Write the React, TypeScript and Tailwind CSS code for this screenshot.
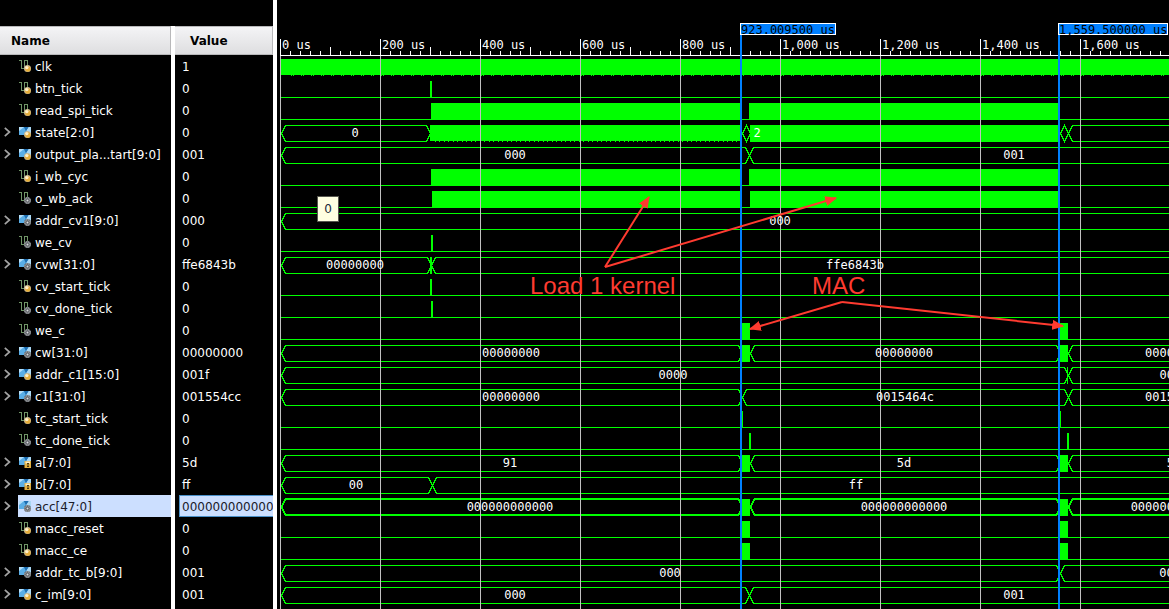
import React from "react";

type Kind = "in" | "out" | "lock";
type Label = [number, string];

interface Signal {
  name: string;
  value: string;
  kind: Kind;
  bus?: boolean;
  selected?: boolean;
  /** bus segments: [start, end] */
  cells?: [number, number][];
  /** solid activity: [start, width] */
  fills?: [number, number][];
  labels?: Label[];
}

const END = 4000;
const HALVES: [number, number][] = [[151, 309], [469, 309]];
const BURSTS: [number, number][] = [[462, 8], [780, 8]];
const BURST_CELLS: [number, number][] = [[1, 462], [470, 780], [788, END]];

/* Horizontal positions are pixels from t = 0, at 2 us per pixel. */
const signals: Signal[] = [
  { name: "clk", value: "1", kind: "in" },
  { name: "btn_tick", value: "0", kind: "in", fills: [[150, 2]] },
  { name: "read_spi_tick", value: "0", kind: "in", fills: HALVES },
  { name: "state[2:0]", value: "0", kind: "in", bus: true, cells: [[1, 150], [462, 470], [780, 788], [788, END]], fills: [[150, 310], [470, 308]], labels: [[75, "0"], [477, "2"]] },
  { name: "output_pla...tart[9:0]", value: "001", kind: "in", bus: true, cells: [[1, 469], [469, END]], labels: [[235, "000"], [734, "001"]] },
  { name: "i_wb_cyc", value: "0", kind: "in", fills: HALVES },
  { name: "o_wb_ack", value: "0", kind: "out", fills: [[152, 308], [470, 308]] },
  { name: "addr_cv1[9:0]", value: "000", kind: "out", bus: true, cells: [[1, END]], labels: [[500, "000"]] },
  { name: "we_cv", value: "0", kind: "out", fills: [[151, 2]] },
  { name: "cvw[31:0]", value: "ffe6843b", kind: "out", bus: true, cells: [[1, 151], [151, END]], fills: [[150, 2]], labels: [[75, "00000000"], [575, "ffe6843b"]] },
  { name: "cv_start_tick", value: "0", kind: "in", fills: [[150, 2]] },
  { name: "cv_done_tick", value: "0", kind: "out", fills: [[151, 2]] },
  { name: "we_c", value: "0", kind: "out", fills: BURSTS },
  { name: "cw[31:0]", value: "00000000", kind: "out", bus: true, cells: BURST_CELLS, fills: BURSTS, labels: [[231, "00000000"], [624, "00000000"], [894, "00000000"]] },
  { name: "addr_c1[15:0]", value: "001f", kind: "in", bus: true, cells: [[1, 788], [788, END]], fills: [[787, 1]], labels: [[393, "0000"], [894, "001f"]] },
  { name: "c1[31:0]", value: "001554cc", kind: "out", bus: true, cells: [[1, 462], [462, 788], [788, END]], labels: [[231, "00000000"], [625, "0015464c"], [894, "001554cc"]] },
  { name: "tc_start_tick", value: "0", kind: "in", fills: [[462, 1], [780, 1]] },
  { name: "tc_done_tick", value: "0", kind: "out", fills: [[469, 2], [787, 2]] },
  { name: "a[7:0]", value: "5d", kind: "lock", bus: true, cells: BURST_CELLS, fills: BURSTS, labels: [[230, "91"], [624, "5d"], [894, "5d"]] },
  { name: "b[7:0]", value: "ff", kind: "lock", bus: true, cells: [[1, 152], [152, END]], labels: [[76, "00"], [576, "ff"]] },
  { name: "acc[47:0]", value: "000000000000", kind: "out", bus: true, selected: true, cells: BURST_CELLS, fills: BURSTS, labels: [[230, "000000000000"], [624, "000000000000"], [894, "000000000000"]] },
  { name: "macc_reset", value: "0", kind: "in", fills: BURSTS },
  { name: "macc_ce", value: "0", kind: "in", fills: BURSTS },
  { name: "addr_tc_b[9:0]", value: "001", kind: "out", bus: true, cells: [[1, 780], [780, END]], labels: [[390, "000"], [890, "001"]] },
  { name: "c_im[9:0]", value: "001", kind: "in", bus: true, cells: [[1, 469], [469, END]], labels: [[235, "000"], [734, "001"]] },
];

const MONO = "font-['DejaVu_Sans_Mono',monospace] text-[12px]";

function Badge({ kind }: { kind: Kind }) {
  if (kind === "lock") {
    return (
      <g>
        <rect x="5.5" y="5" width="6.5" height="7" fill="#e3b040" />
        <rect x="6.5" y="5.5" width="4.5" height="2" fill="#fbeec4" />
        <path d="M8 7.5h2M9 7.5v3M8 10.5h2" stroke="#4b3a12" strokeWidth="1" />
      </g>
    );
  }
  if (kind === "out") {
    return (
      <g>
        <circle cx="8.5" cy="8.500" r="3.500" fill="#5f6266" />
        <circle cx="8.500" cy="8.500" r="2.700" fill="none" stroke="#c4c8cc" strokeWidth="1" strokeDasharray="1.3 0.8" />
        <circle cx="8.500" cy="8.500" r="1" fill="#d8dade" />
      </g>
    );
  }
  return (
    <g>
      <circle cx="8.5" cy="8.5" r="3.5" fill="#c9b993" />
      <circle cx="8.9" cy="9" r="2.700" fill="#e6ae3a" />
      <circle cx="7.8" cy="7.600" r="1.700" fill="#fff0c8" />
    </g>
  );
}

function SignalIcon({ bus, kind }: { bus?: boolean; kind: Kind }) {
  return (
    <svg width="12" height="12" viewBox="0 0 12 12" className="shrink-0" aria-hidden="true">
      {bus ? (
        <g>
          <rect x="0" y="1" width="12" height="8" fill="#2f83c4" />
          <path d="M0 1h5L7 5 5 9H0z" fill="#5aaee6" />
          <path d="M0 1h5L0 5z" fill="#b4def8" />
          <path d="M12 1H9.500L7 5l2 4h3z" fill="#a9d8f5" />
          <path d="M5 1h4.500L7 5z" fill="#1e6fb2" />
        </g>
      ) : (
        <path d="M0 0.500h2.500v8H5.500v-8h3v5" fill="none" stroke="#6f9466" strokeWidth="1" shapeRendering="crispEdges" />
      )}
      <Badge kind={kind} />
    </svg>
  );
}

function SignalRow({ s }: { s: Signal }) {
  return (
    <tr className="h-[22px]">
      <td className="border-r-4 border-white p-0">
        <div className="flex h-[22px] items-center">
          <span className="flex w-[18px] shrink-0 items-center pl-1">
            {s.bus && (
              <button type="button" aria-label={"Expand " + s.name} className="block">
                <svg width="7" height="10" viewBox="0 0 7 10" aria-hidden="true">
                  <path d="M0.800 0.800l4.700 4.200-4.700 4.200" fill="none" stroke="#a3a3a3" strokeWidth="1.700" />
                </svg>
              </button>
            )}
          </span>
          <span className={s.selected ? "flex h-[22px] min-w-0 flex-1 items-center gap-1 bg-[#ccdfff] pl-px text-[#1b1b2b]" : "flex h-[22px] min-w-0 flex-1 items-center gap-1 pl-px"}>
            <SignalIcon bus={s.bus} kind={s.kind} />
            <span className="pt-[2px] whitespace-nowrap">{s.name}</span>
          </span>
        </div>
      </td>
      <td className="overflow-hidden p-0 pl-1">
        <div className={s.selected ? "flex h-[22px] items-center border border-r-0 border-[#4a90c8] bg-[#ccdfff] pt-[2px] pl-[2px] text-[#1b1b2b]" : "flex h-[22px] items-center pt-[2px] pl-[3px]"}>
          {s.value}
        </div>
      </td>
    </tr>
  );
}

function Wave({ s, row }: { s: Signal; row: number }) {
  const top = 59 + 22 * row;
  const low = top + 16;
  const thick = s.selected;
  const o = thick ? 0 : 0.5;
  const mid = top + 8 + o;
  if (s.name === "clk") {
    return (
      <g>
        <rect x="1" y={top} width={END} height="16" fill="#00ff00" />
        <line x1="11" x2={END} y1={low + 0.5} y2={low + 0.5} stroke="#00ff00" strokeDasharray="1 1 1 7" />
      </g>
    );
  }
  const isState = s.name === "state[2:0]";
  return (
    <g>
      {!s.bus && <rect x="1" y={low} width={END} height="1" fill="#00ff00" />}
      {s.fills?.map(([x, w]) => (
        <rect key={x} x={x} y={top} width={w} height={isState && x === 150 ? 16 : 17} fill="#00ff00" />
      ))}
      {isState && <line x1="155" x2="460" y1={low + 0.5} y2={low + 0.5} stroke="#00ff00" strokeDasharray="1 3 1 4" />}
      {s.cells?.map(([a, b]) => (
        <path
          key={a}
          d={`M${a + 0.5} ${mid}L${a + 4.5} ${top + o}H${b - 3.5}L${b + 0.5} ${mid}L${b - 3.5} ${low + o}H${a + 4.5}Z`}
          fill="none"
          stroke="#00ff00"
          strokeWidth={thick ? 2 : 1}
        />
      ))}
    </g>
  );
}

const minor = Array.from({ length: 240 }, (_, i) => i * 10);
const major = Array.from({ length: 24 }, (_, i) => i * 100);
const LAST_LABEL = 800;

function Waveforms() {
  return (
    <svg className={"absolute inset-0 h-full w-full " + MONO} role="img" aria-label="Waveforms">
      <defs>
        <marker id="head" viewBox="0 0 10 10" refX="9" refY="5" markerWidth="12" markerHeight="12" markerUnits="userSpaceOnUse" orient="auto">
          <path d="M0 0.800L10 5L0 9.200z" fill="#ff3b30" />
        </marker>
      </defs>
      <g transform="translate(3 0)">
        <g shapeRendering="crispEdges">
          <rect x="0" y="55" width={END} height="1" fill="#fff" />
          {minor.map((x) => {
            const h = x % 100 === 0 ? 16 : x % 50 === 0 && x < 500 ? 8 : 4;
            return <rect key={x} x={x} y={55 - h} width="1" height={h} fill="#fff" />;
          })}
          {signals.map((s, i) => (
            <Wave key={s.name} s={s} row={i} />
          ))}
          {major.map((x) => (
            <rect key={x} x={x} y="56" width="1" height="100%" fill="#c0c0c0" />
          ))}
        </g>
        <g fill="#fff">
          {major.filter((x) => x <= LAST_LABEL).map((x) => (
            <text key={x} x={x + 2} y="49">{(x * 2).toLocaleString("en-US") + " us"}</text>
          ))}
        </g>
        <g fill="#fff" textAnchor="middle">
          {signals.map((s, i) =>
            s.labels?.map(([x, t]) => (
              <text key={s.name + x} x={x} y={71 + 22 * i}>{t}</text>
            ))
          )}
        </g>
        <g shapeRendering="crispEdges" fill="#0080ff">
          <rect x="460" y="35" width="2" height="100%" />
          <rect x="778" y="35" width="2" height="100%" />
          <rect x="460.500" y="23.500" width="95" height="11" stroke="#fff" />
          <rect x="778.500" y="23.500" width="109" height="11" stroke="#fff" />
        </g>
        <text x="461" y="34" fill="#000">923.009500 us</text>
        <text x="779" y="34" fill="#000">1,559.500000 us</text>
        <g stroke="#ff3b30" strokeWidth="2">
          <line x1="325" y1="267" x2="369" y2="197" markerEnd="url(#head)" />
          <line x1="325" y1="267" x2="556" y2="198" markerEnd="url(#head)" />
          <line x1="562" y1="302" x2="470" y2="329" markerEnd="url(#head)" />
          <line x1="562" y1="302" x2="783" y2="326" markerEnd="url(#head)" />
        </g>
        <g fill="#ff3b30" className="font-['Liberation_Sans',sans-serif] text-[24px]">
          <text x="250" y="294">Load 1 kernel</text>
          <text x="532" y="294">MAC</text>
        </g>
      </g>
    </svg>
  );
}

const HEAD = "flex h-[29px] items-center border-t border-r border-b border-[#b8b8ba] bg-linear-to-b from-[#f4f4f6] to-[#dedee0] text-left font-bold text-black";

export default function App() {
  return (
    <main className="flex min-h-screen overflow-hidden bg-black font-['DejaVu_Sans',sans-serif] text-[12px] leading-[16px] text-white">
      <section className="flex w-[277px] shrink-0 flex-col border-r-4 border-white pt-[26px]">
        <table className="w-full table-fixed border-separate border-spacing-0">
          <colgroup>
            <col className="w-[175px]" />
            <col />
          </colgroup>
          <thead>
            <tr>
              <th scope="col" className="border-r-4 border-white p-0">
                <div className={HEAD + " pl-[11px]"}>Name</div>
              </th>
              <th scope="col" className="p-0">
                <div className={HEAD + " pl-[15px]"}>Value</div>
              </th>
            </tr>
          </thead>
          <tbody>
            {signals.map((s) => (
              <SignalRow key={s.name} s={s} />
            ))}
          </tbody>
        </table>
        <div className="w-[175px] flex-1 border-r-4 border-white" />
      </section>
      <section className="relative min-w-0 flex-1 overflow-hidden">
        <Waveforms />
        <div role="tooltip" className="absolute top-[196px] left-[40px] flex h-[26px] w-[22px] items-center justify-center border border-[#55554d] bg-[#ffffe1] text-[#1b2a3a]">
          0
        </div>
      </section>
    </main>
  );
}
